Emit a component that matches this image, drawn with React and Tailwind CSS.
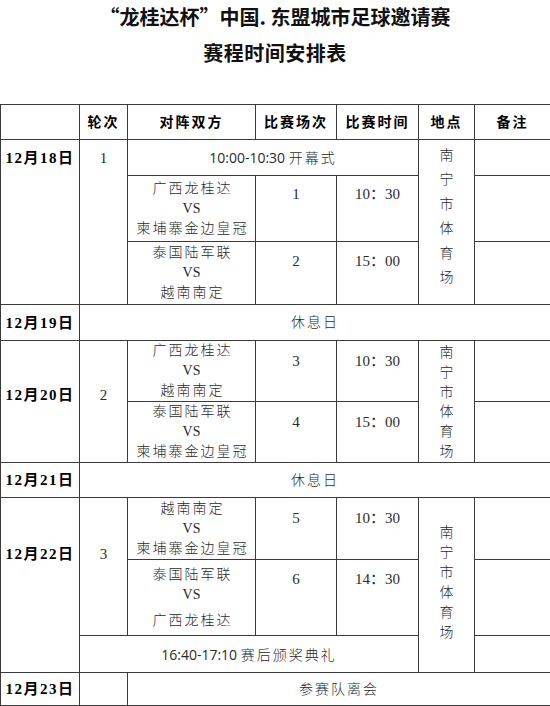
import React from "react";

const serif = { fontFamily: '"Liberation Serif", "Noto Sans CJK SC", serif' };
const B = "border-[1.5px] border-[#3a3a3a]";

function Teams({ a, b, gap }) {
  return (
    <div className="flex flex-col items-center text-[14px] leading-[20px] text-[#2a2a2a] font-light">
      <div className="tracking-[2px] pl-[2px]">{a}</div>
      <div>VS</div>
      <div className={`tracking-[2px] pl-[2px] ${gap ? "mt-[6px]" : ""}`}>{b}</div>
    </div>
  );
}

function Venue({ lh, pt }) {
  return (
    <div className={`flex flex-col items-center text-[14px] text-[#2a2a2a] font-light ${pt} ${lh}`}>
      {"南宁市体育场".split("").map((c, i) => (
        <div key={i}>{c}</div>
      ))}
    </div>
  );
}

export default function App() {
  const head = `${B} text-center align-middle text-[14px] font-bold tracking-[2px] text-black`;
  const dateBase = `${B} text-center text-[15px] font-bold tracking-[1.5px] text-black leading-[20px]`;
  const dateTop = `${dateBase} align-top`;
  const dateMid = `${dateBase} align-middle`;
  const num = `${B} text-center align-top text-[15px] leading-[20px] text-[#2a2a2a]`;
  const team = `${B} text-center align-middle p-0`;
  const empty = `${B}`;
  const rest = `${B} text-center align-middle text-[14px] tracking-[2px] text-[#2a2a2a] font-light`;
  const sans = { fontFamily: '"Open Sans", "Noto Sans CJK SC", sans-serif' };
  return (
    <div className="w-[550px] h-[706px] bg-white overflow-hidden" style={serif}>
      <div className="h-[104px] flex flex-col items-center" style={{ fontFamily: '"Noto Sans CJK SC", sans-serif' }}>
        <div className="pt-[4px] text-[20px] leading-[26px] font-bold text-[#111]">“龙桂达杯”中国. 东盟城市足球邀请赛</div>
        <div className="mt-[10px] text-[20px] leading-[26px] font-bold text-[#111] tracking-[0.5px]">赛程时间安排表</div>
      </div>
      <table className="w-[550px] table-fixed border-collapse">
        <colgroup>
          <col className="w-[79px]" />
          <col className="w-[48px]" />
          <col className="w-[128px]" />
          <col className="w-[81px]" />
          <col className="w-[82px]" />
          <col className="w-[56px]" />
          <col className="w-[76px]" />
        </colgroup>
        <tbody>
          <tr className="h-[35px]">
            <td className={head}></td>
            <td className={head}>轮次</td>
            <td className={head}>对阵双方</td>
            <td className={head}>比赛场次</td>
            <td className={head}>比赛时间</td>
            <td className={head}>地点</td>
            <td className={head}>备注</td>
          </tr>
          <tr className="h-[36px]">
            <td rowSpan={3} className={`${dateTop} pt-[8px]`}>12月18日</td>
            <td rowSpan={3} className={`${num} pt-[8px]`}>1</td>
            <td colSpan={3} className={`${B} text-center align-middle text-[14px] text-[#2a2a2a]`} style={sans}>
              10:00-10:30 <span className="tracking-[2px] font-light">开幕式</span>
            </td>
            <td rowSpan={3} className={`${B} align-top p-0`}>
              <Venue lh="leading-[24.4px]" pt="pt-[4px]" />
            </td>
            <td className={empty}></td>
          </tr>
          <tr className="h-[66px]">
            <td className={team}><Teams a="广西龙桂达" b="柬埔寨金边皇冠" /></td>
            <td className={`${num} pt-[8px]`}>1</td>
            <td className={`${num} pt-[8px]`}>10：30</td>
            <td className={empty}></td>
          </tr>
          <tr className="h-[63px]">
            <td className={team}><Teams a="泰国陆军联" b="越南南定" /></td>
            <td className={`${num} pt-[9px]`}>2</td>
            <td className={`${num} pt-[9px]`}>15：00</td>
            <td className={empty}></td>
          </tr>
          <tr className="h-[36px]">
            <td className={dateMid}>12月19日</td>
            <td colSpan={6} className={rest}>休息日</td>
          </tr>
          <tr className="h-[61px]">
            <td rowSpan={2} className={`${dateTop} pt-[44px]`}>12月20日</td>
            <td rowSpan={2} className={`${num} pt-[44px]`}>2</td>
            <td className={team}><Teams a="广西龙桂达" b="越南南定" /></td>
            <td className={`${num} pt-[10px]`}>3</td>
            <td className={`${num} pt-[10px]`}>10：30</td>
            <td rowSpan={2} className={`${B} align-top p-0`}>
              <Venue lh="leading-[19.8px]" pt="pt-[2px]" />
            </td>
            <td className={empty}></td>
          </tr>
          <tr className="h-[61px]">
            <td className={team}><Teams a="泰国陆军联" b="柬埔寨金边皇冠" /></td>
            <td className={`${num} pt-[10px]`}>4</td>
            <td className={`${num} pt-[10px]`}>15：00</td>
            <td className={empty}></td>
          </tr>
          <tr className="h-[35px]">
            <td className={dateMid}>12月21日</td>
            <td colSpan={6} className={rest}>休息日</td>
          </tr>
          <tr className="h-[62px]">
            <td rowSpan={3} className={`${dateTop} pt-[46px]`}>12月22日</td>
            <td rowSpan={2} className={`${num} pt-[46px]`}>3</td>
            <td className={team}><Teams a="越南南定" b="柬埔寨金边皇冠" /></td>
            <td className={`${num} pt-[10px]`}>5</td>
            <td className={`${num} pt-[10px]`}>10：30</td>
            <td rowSpan={3} className={`${B} align-top p-0`}>
              <Venue lh="leading-[20px]" pt="pt-[25px]" />
            </td>
            <td className={empty}></td>
          </tr>
          <tr className="h-[76px]">
            <td className={team}><Teams a="泰国陆军联" b="广西龙桂达" gap /></td>
            <td className={`${num} pt-[9px]`}>6</td>
            <td className={`${num} pt-[9px]`}>14：30</td>
            <td className={empty}></td>
          </tr>
          <tr className="h-[37px]">
            <td colSpan={4} className={`${B} text-center align-middle text-[14px] text-[#2a2a2a]`} style={sans}>
              16:40-17:10 <span className="tracking-[2px] font-light">赛后颁奖典礼</span>
            </td>
            <td className={empty}></td>
          </tr>
          <tr className="h-[33px]">
            <td className={dateMid}>12月23日</td>
            <td className={empty}></td>
            <td colSpan={5} className={rest}>参赛队离会</td>
          </tr>
        </tbody>
      </table>
    </div>
  );
}
